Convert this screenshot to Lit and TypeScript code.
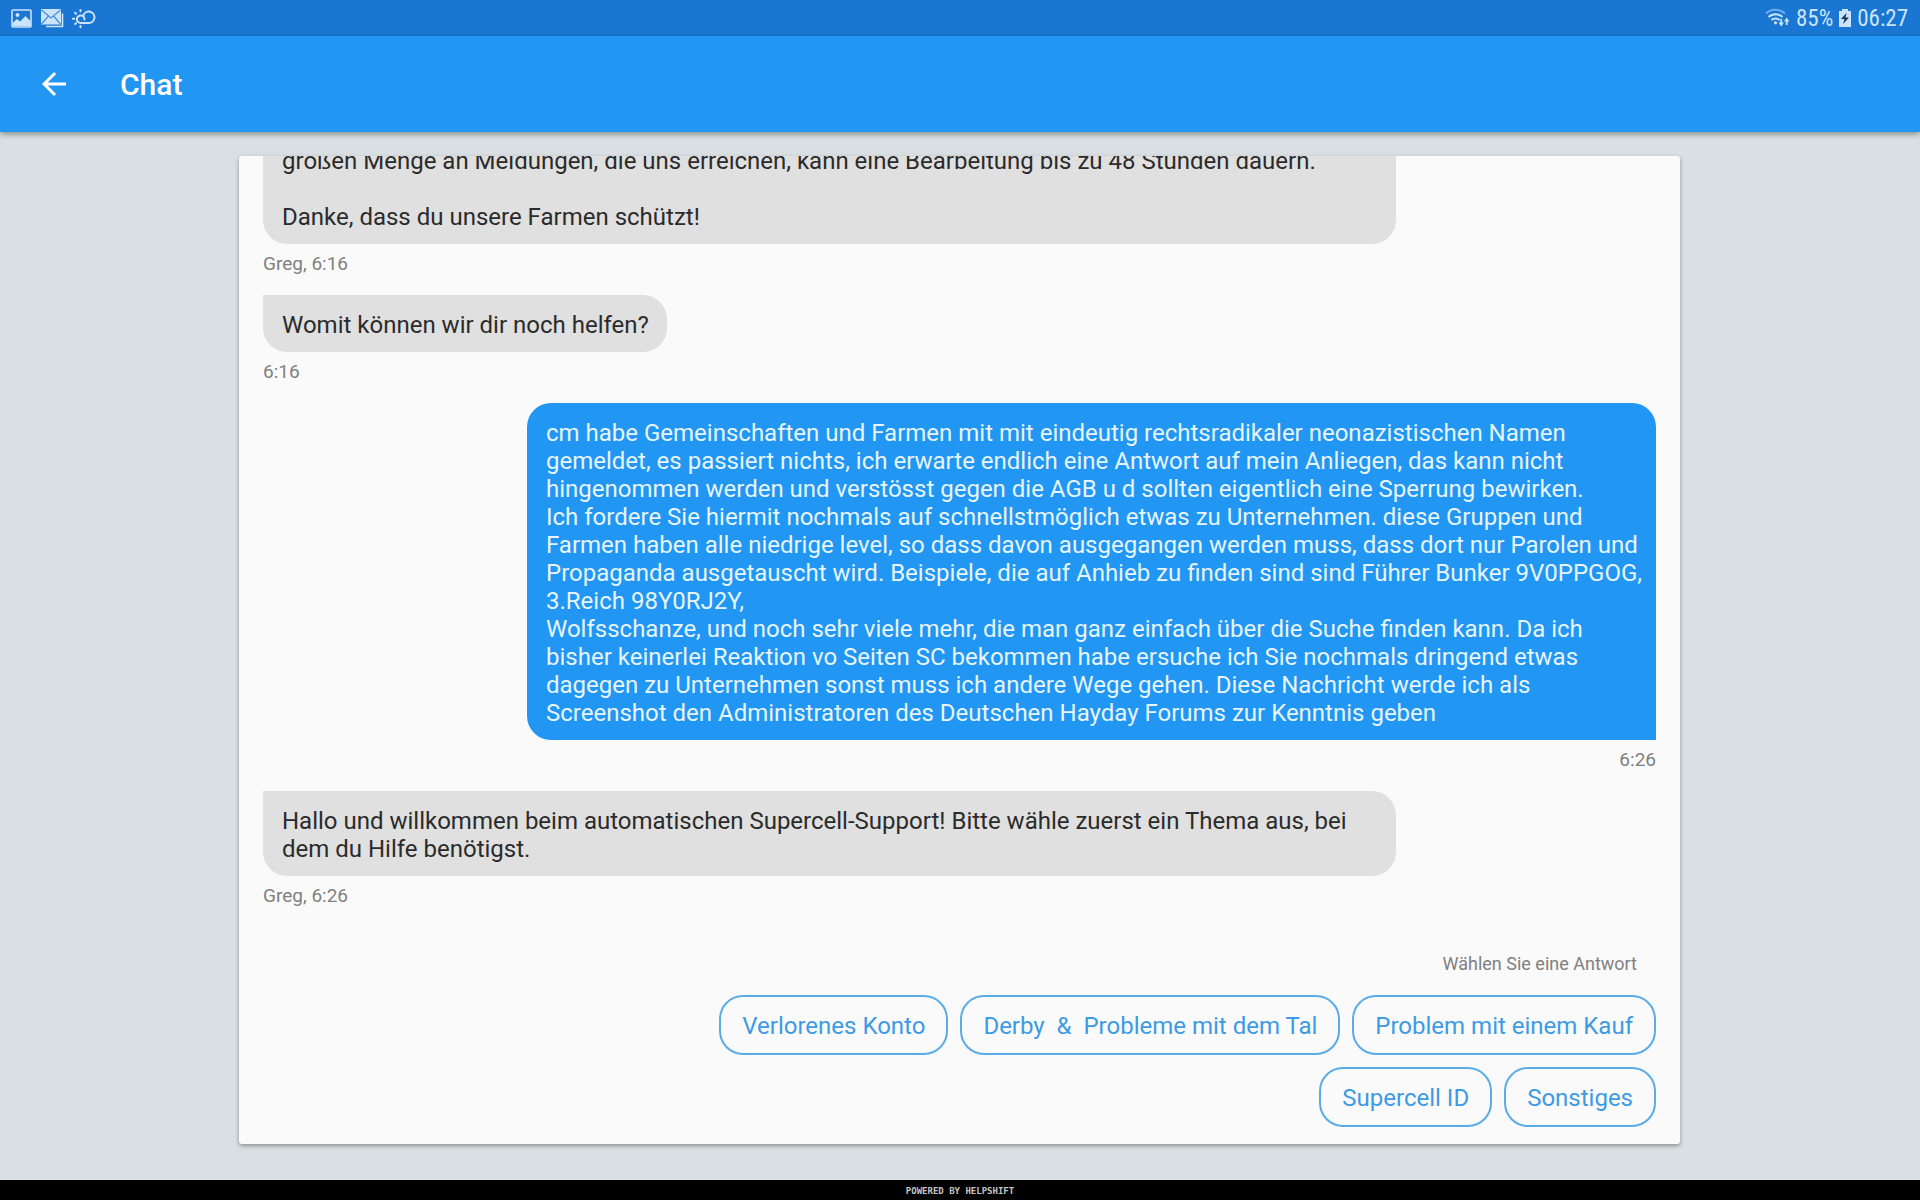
import { LitElement, html, css, nothing } from "lit";
import { customElement, property } from "lit/decorators.js";

interface Message {
  from: "support" | "user";
  text: string;
  meta: string;
  full?: boolean;
}

const MESSAGES: Message[] = [
  {
    from: "support",
    full: true,
    text:
      "großen Menge an Meldungen, die uns erreichen, kann eine Bearbeitung bis zu 48 Stunden dauern.\n\n" +
      "Danke, dass du unsere Farmen schützt!",
    meta: "Greg, 6:16",
  },
  { from: "support", text: "Womit können wir dir noch helfen?", meta: "6:16" },
  {
    from: "user",
    text:
      "cm habe Gemeinschaften und Farmen mit mit eindeutig rechtsradikaler neonazistischen Namen gemeldet, es passiert nichts, ich erwarte endlich eine Antwort auf mein Anliegen, das kann nicht hingenommen werden und verstösst gegen die AGB u d sollten eigentlich eine Sperrung bewirken.\n" +
      "Ich fordere Sie hiermit nochmals auf schnellstmöglich etwas zu Unternehmen. diese Gruppen und Farmen haben alle niedrige level, so dass davon ausgegangen werden muss, dass dort nur Parolen und Propaganda ausgetauscht wird. Beispiele, die auf Anhieb zu finden sind sind Führer Bunker 9V0PPGOG, 3.Reich 98Y0RJ2Y,\n" +
      "Wolfsschanze, und noch sehr viele mehr, die man ganz einfach über die Suche finden kann. Da ich bisher keinerlei Reaktion vo Seiten SC bekommen habe ersuche ich Sie nochmals dringend etwas dagegen zu Unternehmen sonst muss ich andere Wege gehen. Diese Nachricht werde ich als Screenshot den Administratoren des Deutschen Hayday Forums zur Kenntnis geben",
    meta: "6:26",
  },
  {
    from: "support",
    full: true,
    text:
      "Hallo und willkommen beim automatischen Supercell-Support! Bitte wähle zuerst ein Thema aus, bei dem du Hilfe benötigst.",
    meta: "Greg, 6:26",
  },
];

const REPLIES = [
  "Verlorenes Konto",
  "Derby  &  Probleme mit dem Tal",
  "Problem mit einem Kauf",
  "Supercell ID",
  "Sonstiges",
];

@customElement("status-bar")
export class StatusBar extends LitElement {
  static styles = css`
    :host {
      box-sizing: border-box;
      display: flex;
      justify-content: space-between;
      align-items: center;
      flex: none;
      height: 36px;
      padding: 0 12px 0 10px;
      background: #1976d2;
      color: #cbe4fb;
      font: 23px/34px "Roboto Condensed", "Liberation Sans Narrow", Roboto, sans-serif;
    }
    .group {
      display: flex;
      align-items: center;
    }
    .notices {
      gap: 8px;
    }
    .system {
      gap: 6px;
    }
    .value {
      padding-top: 2px;
    }
    svg {
      display: block;
    }
  `;

  render() {
    return html`
      <div class="group notices">
        <svg width="22" height="22" viewBox="0 0 22 22" role="img" aria-label="Bild">
          <rect x="2" y="3" width="19" height="17" rx="1" fill="none" stroke="currentColor" stroke-width="1.6" />
          <circle cx="7.5" cy="8" r="2" fill="currentColor" />
          <path d="M3 19v-3.500l4-3.500 3 2.500 5.500-5.500 5 5v5z" fill="currentColor" />
        </svg>
        <svg width="24" height="22" viewBox="0 0 24 22" role="img" aria-label="E-Mail">
          <rect x="1" y="2" width="20" height="15.500" fill="currentColor" />
          <path d="M1.500 3l9.500 8 9.500-8M1.500 17l7-8M20.500 17l-7-8" fill="none" stroke="#4a90d9" stroke-width="1.300" />
          <path d="M22.500 6.500v13H6" fill="none" stroke="currentColor" stroke-width="1.600" />
        </svg>
        <svg width="25" height="22" viewBox="1 0 25 22" role="img" aria-label="Wetter">
          <g fill="none" stroke="currentColor" stroke-width="2" stroke-linecap="round">
            <path d="M13.500 12.500a3.800 3.800 0 1 0-3.700 3.500h8a5.700 5.700 0 1 0-5.400-7.600" />
            <path d="M9.500 3v1.200M4 5.800l1 .9M1.900 11.700h1.400M4.200 17l.9-.8M9.500 19v1.200" />
          </g>
        </svg>
      </div>
      <div class="group system">
        <svg width="25" height="22" viewBox="0 0 25 22" role="img" aria-label="WLAN">
          <g fill="none" stroke="currentColor" stroke-width="2">
            <path d="M1 6.500a14 14 0 0 1 19 0" opacity=".5" />
            <path d="M3.500 10a10 10 0 0 1 14 0M6.500 13a5.800 5.800 0 0 1 8 0" />
          </g>
          <circle cx="10.500" cy="15.800" r="1.600" fill="currentColor" />
          <path d="M13.500 15.500h1.800V12h1.800v3.500h1.800l-2.700 4zM19 14.500l2.700-4 2.700 4h-1.800V18h-1.800v-3.500z" fill="currentColor" />
        </svg>
        <span class="value">85%</span>
        <svg width="12" height="20" viewBox="0 0 12 20" role="img" aria-label="Akku lädt">
          <path d="M3 1h6v2h3v16H0V3h3z" fill="currentColor" />
          <path d="M7.500 5L2 11h3.500l-1.500 5 6-6.500H6.500z" fill="#12345c" />
        </svg>
        <span class="value">06:27</span>
      </div>
    `;
  }
}

@customElement("chat-message")
export class ChatMessage extends LitElement {
  @property({ reflect: true }) from: Message["from"] = "support";
  @property({ type: Boolean, reflect: true }) full = false;
  @property() text = "";
  @property() meta = "";

  static styles = css`
    :host {
      display: flex;
      flex-direction: column;
      align-items: flex-start;
      flex: none;
    }
    :host([from="user"]) {
      align-items: flex-end;
    }
    .bubble {
      box-sizing: border-box;
      max-width: 1133px;
      margin: 0;
      padding: 16px 18px 13px 19px;
      border-radius: 0 24px 24px 24px;
      background: #e0e0e0;
      color: #2b2b2b;
      font-size: 24px;
      line-height: 28px;
      white-space: pre-line;
    }
    :host([full]) .bubble {
      width: 100%;
    }
    :host([from="user"]) .bubble {
      max-width: 1129px;
      padding-right: 12px;
      border-radius: 24px 24px 0 24px;
      background: #2196f3;
      color: #e6f5ff;
    }
    .meta {
      margin-top: 9px;
      font-size: 19px;
      line-height: 22px;
      color: #808080;
    }
  `;

  render() {
    return html`
      <p class="bubble">${this.text}</p>
      ${this.meta ? html`<span class="meta">${this.meta}</span>` : nothing}
    `;
  }
}

@customElement("app-root")
export class AppRoot extends LitElement {
  static styles = css`
    :host {
      display: flex;
      flex-direction: column;
      height: 100vh;
      background: #d9dfe2;
      font-family: Roboto, sans-serif;
    }
    .appbar {
      display: flex;
      align-items: center;
      flex: none;
      height: 96px;
      padding: 0 36px;
      gap: 48px;
      background: #2196f3;
      box-shadow: 0 2px 6px rgba(0, 0, 0, 0.4);
      color: #fff;
    }
    .back {
      display: block;
      padding: 0;
      border: 0;
      background: none;
      color: inherit;
      cursor: pointer;
    }
    .back svg {
      display: block;
    }
    h1 {
      margin: 0;
      padding-top: 2px;
      font-size: 30px;
      line-height: 36px;
      font-weight: 500;
    }
    main {
      display: flex;
      flex: 1;
      min-height: 0;
      padding: 24px 240px 36px 239px;
    }
    .card {
      box-sizing: border-box;
      display: flex;
      flex: 1;
      min-width: 0;
      flex-direction: column;
      justify-content: flex-end;
      overflow: hidden;
      padding: 0 24px 17px;
      border-radius: 3px;
      background: #fafafa;
      box-shadow: 0 2px 4px rgba(0, 0, 0, 0.35);
    }
    .log {
      display: flex;
      flex-direction: column;
      gap: 20px;
    }
    .replies {
      display: flex;
      flex-direction: column;
      align-items: flex-end;
      margin-top: 46px;
    }
    .prompt {
      margin: 0 19px 20px 0;
      font-size: 18px;
      line-height: 22px;
      font-weight: 400;
      color: #808080;
    }
    .options {
      display: flex;
      flex-wrap: wrap;
      justify-content: flex-end;
      gap: 12px;
      max-width: 78%;
    }
    .option {
      height: 60px;
      padding: 2px 21px 0;
      border: 2px solid #5aace9;
      border-radius: 24px;
      background: none;
      color: #3d9be6;
      font: 24px/28px Roboto, sans-serif;
      white-space: pre;
      cursor: pointer;
    }
    footer {
      flex: none;
      padding-top: 3px;
      background: #000;
      color: #c4c4c4;
      font: bold 9px/17px "DejaVu Sans Mono", monospace;
      text-align: center;
      text-transform: uppercase;
    }
  `;

  render() {
    return html`
      <status-bar></status-bar>
      <header class="appbar">
        <button class="back" aria-label="Zurück">
          <svg width="36" height="36" viewBox="0 0 24 24" fill="currentColor">
            <path d="M20 11H7.830l5.590-5.590L12 4l-8 8 8 8 1.410-1.410L7.830 13H20v-2z" />
          </svg>
        </button>
        <h1>Chat</h1>
      </header>
      <main>
        <section class="card">
          <div class="log">
            ${MESSAGES.map(
              (m) => html`<chat-message
                from=${m.from}
                ?full=${m.full}
                .text=${m.text}
                .meta=${m.meta}
              ></chat-message>`,
            )}
          </div>
          <div class="replies">
            <h2 class="prompt">Wählen Sie eine Antwort</h2>
            <div class="options">
              ${REPLIES.map((r) => html`<button class="option">${r}</button>`)}
            </div>
          </div>
        </section>
      </main>
      <footer>Powered by Helpshift</footer>
    `;
  }
}
